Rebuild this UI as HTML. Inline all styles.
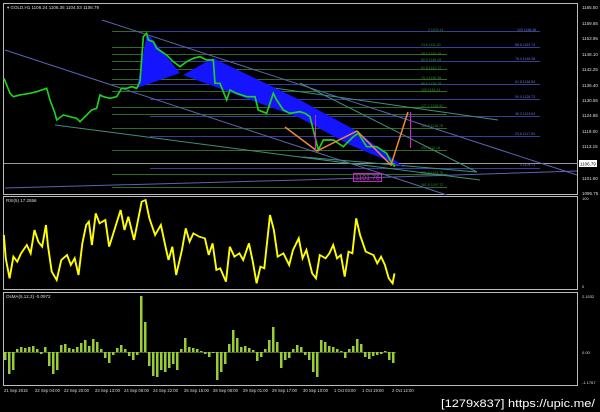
<!DOCTYPE html>
<html><head><meta charset="utf-8"><style>
html,body{margin:0;padding:0;background:#000;width:600px;height:412px;overflow:hidden}
svg{display:block}
text{font-family:"Liberation Sans",sans-serif}
</style></head><body>
<svg width="600" height="412" viewBox="0 0 600 412" xmlns="http://www.w3.org/2000/svg">
<rect width="600" height="412" fill="#000"/>
<g fill="none" stroke="#bbb" stroke-width="1">
<rect x="3.5" y="3.5" width="574" height="191"/>
<rect x="3.5" y="196.5" width="574" height="93"/>
<rect x="3.5" y="292.5" width="574" height="93"/>
</g>
<g stroke="#2f6b2a" stroke-width="1">
<line x1="112" y1="31.5" x2="447" y2="31.5"/><line x1="112" y1="47.5" x2="447" y2="47.5"/>
<line x1="112" y1="54.5" x2="447" y2="54.5"/><line x1="112" y1="61.5" x2="447" y2="61.5"/>
<line x1="112" y1="69.5" x2="447" y2="69.5"/><line x1="112" y1="79.5" x2="447" y2="79.5"/>
<line x1="112" y1="84.5" x2="447" y2="84.5"/><line x1="112" y1="91.5" x2="447" y2="91.5"/>
<line x1="112" y1="107.5" x2="447" y2="107.5"/><line x1="112" y1="114.5" x2="447" y2="114.5"/>
<line x1="112" y1="128.5" x2="447" y2="128.5"/><line x1="112" y1="150.5" x2="447" y2="150.5"/>
<line x1="112" y1="174.5" x2="447" y2="174.5"/><line x1="112" y1="187.5" x2="447" y2="187.5"/>
</g>
<g stroke="#34409a" stroke-width="1">
<line x1="150" y1="31.5" x2="540" y2="31.5"/><line x1="150" y1="47.5" x2="540" y2="47.5"/>
<line x1="150" y1="61.5" x2="540" y2="61.5"/><line x1="150" y1="84.5" x2="540" y2="84.5"/>
<line x1="150" y1="99.5" x2="540" y2="99.5"/><line x1="150" y1="116.5" x2="540" y2="116.5"/>
<line x1="150" y1="136.5" x2="540" y2="136.5"/><line x1="150" y1="168.5" x2="540" y2="168.5"/>
</g>
<line x1="4" y1="163.5" x2="578" y2="163.5" stroke="#9a9a9a"/>
<g fill="none" stroke-width="1">
<polyline points="102,20 577,175" stroke="#5a64b0"/>
<polyline points="5,50 300,147 447,195" stroke="#5a64b0"/>
<polyline points="5,188 300,180 577,171" stroke="#5a64b0"/>
<polyline points="55,125 300,157 480,180" stroke="#3f8f7a"/>
<polyline points="267,87 498,120" stroke="#3f8f7a"/>
<polyline points="300,83 477,172" stroke="#3f8f7a"/>
<polyline points="303,157 477,172" stroke="#3f8f7a"/>
</g>
<polygon points="137,88 147,33 180,73" fill="#1414ff"/>
<polygon points="183,75 213,58 300,100 355,130 405,168 350,145 300,118" fill="#1414ff"/>
<g transform="scale(0.3333)">
<polyline fill="none" stroke="#1fd11f" stroke-width="5" points="12,235 30,280 40,290 60,285 90,280 110,275 140,265 150,300 165,340 170,360 190,345 230,355 240,365 260,345 275,330 290,325 300,285 310,290 330,295 350,290 365,265 380,265 395,260 410,265 420,245 430,110 440,100 445,120 460,125 470,145 500,165 520,185 540,200 560,185 580,175 600,170 620,180 640,180 645,250 660,250 680,300 690,270 710,280 740,290 765,290 775,330 800,340 820,280 830,300 850,330 870,340 900,335 915,340 930,350 945,410 955,450 970,420 1000,420 1030,440 1060,410 1075,400 1100,440 1130,440 1160,460 1175,490 1185,500"/>
</g>
<polyline fill="none" stroke="#f08a3c" stroke-width="1.5" points="285,127 317,151 357,131 391,165 408,112"/>
<line x1="315.5" y1="115" x2="315.5" y2="150" stroke="#e020e0"/>
<line x1="410.5" y1="112" x2="410.5" y2="148" stroke="#e020e0"/>
<rect x="353.5" y="173.5" width="28" height="8" fill="none" stroke="#d020d0"/>
<text x="355" y="180" font-size="7" fill="#d020d0">1101.76</text>
<g font-size="3.5" fill="#2f8f2a">
<text x="428" y="31">0 1103.14</text><text x="421" y="46">23.6 1111.20</text><text x="421" y="55">38.2 1140.19</text>
<text x="421" y="61">50.0 1146.28</text><text x="421" y="69">61.8 1142.72</text><text x="421" y="79">76.4 1136.36</text>
<text x="421" y="85">88.6 1136.78</text><text x="421" y="91">100 1134.24</text><text x="421" y="107">127.2 1126.92</text>
<text x="421" y="127">161.8 1118.78</text><text x="421" y="149">200 1113.18</text><text x="421" y="174">261.8 1103.78</text><text x="421" y="186">361.8 1097.72</text>
</g>
<g font-size="3.5" fill="#6a74d0">
<text x="517" y="31">100 1156.46</text><text x="515" y="46">88.6 1153.74</text><text x="515" y="60">76.4 1148.38</text>
<text x="515" y="83">61.8 1136.84</text><text x="515" y="98">50.0 1128.72</text><text x="515" y="115">38.2 1124.64</text>
<text x="515" y="135">23.6 1117.83</text><text x="520" y="166">0 1104.71</text>
</g>
<text x="7" y="9" font-size="4.5" fill="#ddd">▾ GOLD,H1  1106.24 1106.36 1104.03 1106.79</text>
<g font-size="4.5" fill="#ddd">
<text x="582" y="9">1165.50</text><text x="582" y="25">1159.65</text><text x="582" y="40">1153.95</text>
<text x="582" y="56">1148.10</text><text x="582" y="71">1142.25</text><text x="582" y="87">1136.40</text>
<text x="582" y="102">1130.55</text><text x="582" y="117">1124.85</text><text x="582" y="133">1119.00</text>
<text x="582" y="148">1113.15</text><text x="582" y="180">1101.60</text><text x="582" y="195">1095.75</text>
</g>
<rect x="579" y="160" width="18" height="7" fill="#fff"/>
<text x="580" y="165.5" font-size="4.5" fill="#000">1106.79</text>
<text x="6" y="202" font-size="4.5" fill="#ddd">RSI(5) 17.2556</text>
<text x="582" y="200" font-size="4" fill="#ddd">100</text>
<text x="582" y="288" font-size="4" fill="#ddd">0</text>
<g transform="translate(0,195) scale(0.383,0.3333)">
<polyline fill="none" stroke="#ffff00" stroke-width="5" points="10,120 15,190 25,250 35,185 45,200 55,175 70,150 80,175 90,105 100,140 110,155 120,90 125,150 135,230 148,255 160,195 175,180 185,210 195,190 205,240 215,145 225,90 232,80 240,150 250,55 260,85 275,75 285,155 300,100 315,45 325,105 335,65 350,135 370,20 380,15 390,70 405,120 420,90 435,170 440,195 450,155 460,240 475,165 485,100 495,140 505,115 520,125 535,130 545,180 555,145 565,225 575,220 590,260 600,155 612,185 625,175 635,195 650,145 660,200 670,265 680,215 690,220 705,60 715,105 725,185 740,175 755,210 765,165 780,130 790,190 800,165 815,235 825,250 835,180 850,190 860,175 870,150 880,190 890,180 900,245 910,170 920,175 930,70 940,120 955,170 965,175 975,180 985,205 995,185 1005,210 1015,250 1025,265 1030,235"/>
</g>
<text x="6" y="298" font-size="4.5" fill="#ddd">OsMA(5,12,3) -0.0972</text>
<text x="582" y="298" font-size="4" fill="#ddd">2.1532</text>
<text x="582" y="354" font-size="4" fill="#ddd">0.00</text>
<text x="582" y="384" font-size="4" fill="#ddd">-1.1767</text>
<g fill="#9acd32">
<rect x="4" y="352" width="2.5" height="8"/><rect x="8" y="352" width="2.5" height="22"/><rect x="12" y="352" width="2.5" height="18"/>
<rect x="16" y="349" width="2.5" height="3"/><rect x="20" y="347" width="2.5" height="5"/><rect x="24" y="348" width="2.5" height="4"/>
<rect x="28" y="347" width="2.5" height="5"/><rect x="32" y="346" width="2.5" height="6"/><rect x="36" y="349" width="2.5" height="3"/>
<rect x="40" y="352" width="2.5" height="2"/><rect x="44" y="347" width="2.5" height="5"/><rect x="48" y="352" width="2.5" height="14"/>
<rect x="52" y="352" width="2.5" height="22"/><rect x="56" y="352" width="2.5" height="18"/><rect x="60" y="345" width="2.5" height="7"/>
<rect x="64" y="344" width="2.5" height="8"/><rect x="68" y="348" width="2.5" height="4"/><rect x="72" y="349" width="2.5" height="3"/>
<rect x="76" y="347" width="2.5" height="5"/><rect x="80" y="343" width="2.5" height="9"/><rect x="84" y="340" width="2.5" height="12"/>
<rect x="88" y="346" width="2.5" height="6"/><rect x="92" y="339" width="2.5" height="13"/><rect x="96" y="342" width="2.5" height="10"/>
<rect x="100" y="349" width="2.5" height="3"/><rect x="104" y="352" width="2.5" height="6"/><rect x="108" y="352" width="2.5" height="11"/>
<rect x="112" y="352" width="2.5" height="3"/><rect x="116" y="348" width="2.5" height="4"/><rect x="120" y="345" width="2.5" height="7"/>
<rect x="124" y="349" width="2.5" height="3"/><rect x="128" y="352" width="2.5" height="4"/><rect x="132" y="352" width="2.5" height="8"/>
<rect x="136" y="352" width="2.5" height="3"/><rect x="140" y="296" width="2.5" height="56"/><rect x="144" y="322" width="2.5" height="30"/>
<rect x="148" y="352" width="2.5" height="14"/><rect x="152" y="352" width="2.5" height="24"/><rect x="156" y="352" width="2.5" height="25"/>
<rect x="160" y="352" width="2.5" height="18"/><rect x="164" y="352" width="2.5" height="20"/><rect x="168" y="352" width="2.5" height="16"/>
<rect x="172" y="352" width="2.5" height="12"/><rect x="176" y="352" width="2.5" height="18"/><rect x="180" y="349" width="2.5" height="3"/>
<rect x="184" y="338" width="2.5" height="14"/><rect x="188" y="347" width="2.5" height="5"/><rect x="192" y="348" width="2.5" height="4"/>
<rect x="196" y="349" width="2.5" height="3"/><rect x="200" y="351" width="2.5" height="1"/><rect x="204" y="352" width="2.5" height="2"/>
<rect x="208" y="352" width="2.5" height="5"/><rect x="212" y="352" width="2.5" height="1"/><rect x="216" y="352" width="2.5" height="28"/>
<rect x="220" y="352" width="2.5" height="20"/><rect x="224" y="352" width="2.5" height="12"/><rect x="228" y="344" width="2.5" height="8"/>
<rect x="232" y="330" width="2.5" height="22"/><rect x="236" y="338" width="2.5" height="14"/><rect x="240" y="347" width="2.5" height="5"/>
<rect x="244" y="346" width="2.5" height="6"/><rect x="248" y="348" width="2.5" height="4"/><rect x="252" y="350" width="2.5" height="2"/>
<rect x="256" y="352" width="2.5" height="9"/><rect x="260" y="352" width="2.5" height="5"/><rect x="264" y="349" width="2.5" height="3"/>
<rect x="268" y="340" width="2.5" height="12"/><rect x="272" y="327" width="2.5" height="25"/><rect x="276" y="342" width="2.5" height="10"/>
<rect x="280" y="352" width="2.5" height="16"/><rect x="284" y="352" width="2.5" height="8"/><rect x="288" y="352" width="2.5" height="6"/>
<rect x="292" y="349" width="2.5" height="3"/><rect x="296" y="345" width="2.5" height="7"/><rect x="300" y="347" width="2.5" height="5"/>
<rect x="304" y="352" width="2.5" height="3"/><rect x="308" y="352" width="2.5" height="8"/><rect x="312" y="352" width="2.5" height="20"/>
<rect x="316" y="352" width="2.5" height="25"/><rect x="320" y="340" width="2.5" height="12"/><rect x="324" y="342" width="2.5" height="10"/>
<rect x="328" y="346" width="2.5" height="6"/><rect x="332" y="347" width="2.5" height="5"/><rect x="336" y="349" width="2.5" height="3"/>
<rect x="340" y="351" width="2.5" height="1"/><rect x="344" y="352" width="2.5" height="6"/><rect x="348" y="349" width="2.5" height="3"/>
<rect x="352" y="346" width="2.5" height="6"/><rect x="356" y="339" width="2.5" height="13"/><rect x="360" y="344" width="2.5" height="8"/>
<rect x="364" y="352" width="2.5" height="5"/><rect x="368" y="352" width="2.5" height="7"/><rect x="372" y="352" width="2.5" height="4"/>
<rect x="376" y="352" width="2.5" height="3"/><rect x="380" y="352" width="2.5" height="2"/><rect x="384" y="351" width="2.5" height="1"/>
<rect x="388" y="352" width="2.5" height="8"/><rect x="392" y="352" width="2.5" height="11"/>
</g>
<line x1="4" y1="352.5" x2="396" y2="352.5" stroke="#9acd32" stroke-width="0.6"/>
<g font-size="4.2" fill="#ddd">
<text x="4" y="392">21 Sep 2015</text><text x="35" y="392">22 Sep 04:00</text><text x="64" y="392">22 Sep 20:00</text>
<text x="95" y="392">23 Sep 13:00</text><text x="124" y="392">24 Sep 06:00</text><text x="153" y="392">24 Sep 22:00</text>
<text x="184" y="392">25 Sep 15:00</text><text x="213" y="392">28 Sep 08:00</text><text x="243" y="392">29 Sep 01:00</text>
<text x="272" y="392">29 Sep 17:00</text><text x="303" y="392">30 Sep 10:00</text><text x="334" y="392">1 Oct 03:00</text>
<text x="362" y="392">1 Oct 19:00</text><text x="392" y="392">2 Oct 12:00</text>
</g>
<text x="441" y="407" font-size="11" fill="#fff" textLength="154" lengthAdjust="spacingAndGlyphs">[1279x837] https://upic.me/</text>
</svg>
</body></html>
